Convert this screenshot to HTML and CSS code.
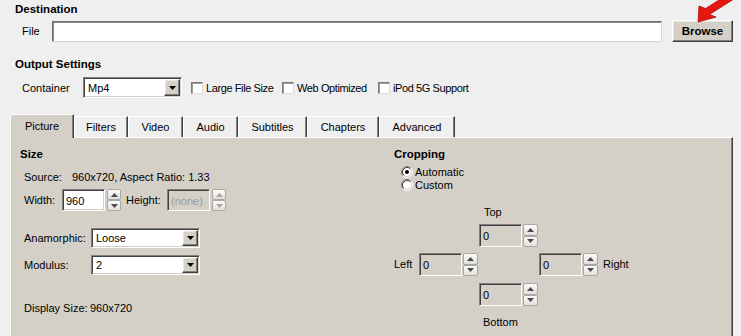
FILE: index.html
```html
<!DOCTYPE html>
<html>
<head>
<meta charset="utf-8">
<link rel="stylesheet" href="styles.css">
</head>
<body>
<div class="app">
  <div class="group-title">Destination</div>
  <div class="file-row">
    <span class="file-lbl">File</span>
    <div class="file-input sunken"></div>
    <button class="browse raised">Browse</button>
  </div>

  <div class="group-title out-title">Output Settings</div>
  <div class="container-row">
    <span class="cont-lbl">Container</span>
    <div class="combo combo-container sunken">
      <span class="combo-text">Mp4</span>
      <span class="combo-btn raised"><svg class="tri" width="7" height="4" viewBox="0 0 7 4"><path d="M0 0h7L3.5 4z"/></svg></span>
    </div>
    <label class="check check-large"><span class="box sunken"></span>Large File Size</label>
    <label class="check check-web"><span class="box sunken"></span>Web Optimized</label>
    <label class="check"><span class="box sunken"></span>iPod 5G Support</label>
  </div>

  <div class="tabs">
    <div class="tab tab-active t-picture">Picture</div>
    <div class="tab t-filters">Filters</div>
    <div class="tab t-video">Video</div>
    <div class="tab t-audio">Audio</div>
    <div class="tab t-subtitles">Subtitles</div>
    <div class="tab t-chapters">Chapters</div>
    <div class="tab t-advanced">Advanced</div>
  </div>

  <div class="panel">
    <div class="size-col">
      <div class="sub-title">Size</div>
      <div class="row info-row"><span class="lbl-source">Source:</span><span>960x720, Aspect Ratio: 1.33</span></div>
      <div class="row width-row">
        <span class="lbl-width">Width:</span>
        <div class="spin spin-tall">
          <div class="spin-field sunken white">960</div>
          <div class="spin-btns">
            <span class="spin-btn"><svg width="7" height="4" viewBox="0 0 7 4"><path d="M0 4h7L3.5 0z"/></svg></span>
            <span class="spin-btn"><svg width="7" height="4" viewBox="0 0 7 4"><path d="M0 0h7L3.5 4z"/></svg></span>
          </div>
        </div>
        <span class="lbl-height">Height:</span>
        <div class="spin spin-tall disabled">
          <div class="spin-field sunken">(none)</div>
          <div class="spin-btns">
            <span class="spin-btn"><svg width="7" height="4" viewBox="0 0 7 4"><path d="M0 4h7L3.5 0z"/></svg></span>
            <span class="spin-btn"><svg width="7" height="4" viewBox="0 0 7 4"><path d="M0 0h7L3.5 4z"/></svg></span>
          </div>
        </div>
      </div>
      <div class="row combo-row anam-row">
        <span class="lbl-combo">Anamorphic:</span>
        <div class="combo combo-wide sunken">
          <span class="combo-text">Loose</span>
          <span class="combo-btn raised"><svg class="tri" width="7" height="4" viewBox="0 0 7 4"><path d="M0 0h7L3.5 4z"/></svg></span>
        </div>
      </div>
      <div class="row combo-row mod-row">
        <span class="lbl-combo">Modulus:</span>
        <div class="combo combo-wide sunken">
          <span class="combo-text">2</span>
          <span class="combo-btn raised"><svg class="tri" width="7" height="4" viewBox="0 0 7 4"><path d="M0 0h7L3.5 4z"/></svg></span>
        </div>
      </div>
      <div class="row display-row"><span class="lbl-display">Display Size:</span><span>960x720</span></div>
    </div>

    <div class="crop-col">
      <div class="sub-title">Cropping</div>
      <div class="radio-row first">
        <svg class="radio" width="12" height="12" viewBox="0 0 12 12"><circle cx="6" cy="6" r="4.5" fill="#fff"/><path d="M9.89 2.11A5.5 5.5 0 0 0 2.11 9.89" stroke="#808080" fill="none"/><path d="M2.11 9.89A5.5 5.5 0 0 0 9.89 2.11" stroke="#fff" fill="none"/><path d="M9.18 2.82A4.5 4.5 0 0 0 2.82 9.18" stroke="#404040" fill="none"/><path d="M2.82 9.18A4.5 4.5 0 0 0 9.18 2.82" stroke="#d4d0c8" fill="none"/><circle cx="6" cy="6" r="2" fill="#000"/></svg>
        <span>Automatic</span>
      </div>
      <div class="radio-row">
        <svg class="radio" width="12" height="12" viewBox="0 0 12 12"><circle cx="6" cy="6" r="4.5" fill="#fff"/><path d="M9.89 2.11A5.5 5.5 0 0 0 2.11 9.89" stroke="#808080" fill="none"/><path d="M2.11 9.89A5.5 5.5 0 0 0 9.89 2.11" stroke="#fff" fill="none"/><path d="M9.18 2.82A4.5 4.5 0 0 0 2.82 9.18" stroke="#404040" fill="none"/><path d="M2.82 9.18A4.5 4.5 0 0 0 9.18 2.82" stroke="#d4d0c8" fill="none"/></svg>
        <span>Custom</span>
      </div>

      <div class="crop-grid">
        <span class="crop-top-lbl">Top</span>
        <div class="spin crop-spin crop-top">
          <div class="spin-field sunken">0</div>
          <div class="spin-btns">
            <span class="spin-btn"><svg width="7" height="4" viewBox="0 0 7 4"><path d="M0 4h7L3.5 0z"/></svg></span>
            <span class="spin-btn"><svg width="7" height="4" viewBox="0 0 7 4"><path d="M0 0h7L3.5 4z"/></svg></span>
          </div>
        </div>
        <span class="crop-left-lbl">Left</span>
        <div class="spin crop-spin crop-left">
          <div class="spin-field sunken">0</div>
          <div class="spin-btns">
            <span class="spin-btn"><svg width="7" height="4" viewBox="0 0 7 4"><path d="M0 4h7L3.5 0z"/></svg></span>
            <span class="spin-btn"><svg width="7" height="4" viewBox="0 0 7 4"><path d="M0 0h7L3.5 4z"/></svg></span>
          </div>
        </div>
        <div class="spin crop-spin crop-right">
          <div class="spin-field sunken">0</div>
          <div class="spin-btns">
            <span class="spin-btn"><svg width="7" height="4" viewBox="0 0 7 4"><path d="M0 4h7L3.5 0z"/></svg></span>
            <span class="spin-btn"><svg width="7" height="4" viewBox="0 0 7 4"><path d="M0 0h7L3.5 4z"/></svg></span>
          </div>
        </div>
        <span class="crop-right-lbl">Right</span>
        <div class="spin crop-spin crop-bottom">
          <div class="spin-field sunken">0</div>
          <div class="spin-btns">
            <span class="spin-btn"><svg width="7" height="4" viewBox="0 0 7 4"><path d="M0 4h7L3.5 0z"/></svg></span>
            <span class="spin-btn"><svg width="7" height="4" viewBox="0 0 7 4"><path d="M0 0h7L3.5 4z"/></svg></span>
          </div>
        </div>
        <span class="crop-bottom-lbl">Bottom</span>
      </div>
    </div>
  </div>
</div>

<svg class="arrow" width="51" height="30" viewBox="0 0 51 30"><path d="M8 22L26 17L19.4 14.5L43.9 -1L40.1 -7L15.6 8.5L9 6Z" fill="#e5170f" stroke="#a30d08" stroke-width="0.8" stroke-linejoin="round"/></svg>
</body>
</html>
```

FILE: styles.css
```css
* { box-sizing: border-box; }
html, body { margin: 0; padding: 0; }
body {
  width: 741px;
  height: 336px;
  overflow: hidden;
  position: relative;
  background: #efefef;
  font-family: "Liberation Sans", Arial, sans-serif;
  font-size: 11px;
  color: #000;
}
.app { padding: 3px 0 0 10px; }

.group-title {
  font-weight: bold;
  font-size: 11.5px;
  line-height: 13px;
  height: 13px;
  padding-left: 5px;
}
.out-title { margin-top: 16px; }

.sunken {
  border: 1px solid;
  border-color: #808080 #ffffff #ffffff #808080;
  box-shadow: inset 1px 1px #404040, inset -1px -1px #d4d0c8;
}
.raised {
  border: 1px solid;
  border-color: #ffffff #404040 #404040 #ffffff;
  box-shadow: inset -1px -1px #808080, inset 1px 1px #e8e6e1;
  background: #d4d0c8;
}

/* File row */
.file-row {
  display: flex;
  align-items: center;
  height: 22px;
  margin-top: 4px;
  padding-left: 12px;
}
.file-lbl { width: 30px; }
.file-input {
  width: 610px;
  height: 21px;
  margin-top: 1px;
  background: #fff;
  border-color: #6e6e6e #d6d6d6 #d6d6d6 #6e6e6e;
  box-shadow: inset 1px 1px #8a8a8a;
}
.browse {
  margin-left: 10px;
  width: 61px;
  height: 22px;
  padding: 0;
  font-family: "Liberation Sans", Arial, sans-serif;
  font-weight: bold;
  font-size: 11.5px;
  color: #000;
}

/* Container row */
.container-row {
  display: flex;
  align-items: center;
  height: 21px;
  margin-top: 6px;
  padding-left: 12px;
}
.cont-lbl { width: 61px; }
.combo {
  display: flex;
  align-items: stretch;
  background: #fff;
  padding: 1px;
}
.combo-container { width: 99px; height: 21px; }
.combo-text {
  flex: 1;
  padding-left: 3px;
  display: flex;
  align-items: center;
}
.combo-btn {
  width: 16px;
  display: flex;
  align-items: center;
  justify-content: center;
}
.tri { fill: #000; display: block; }

.check {
  display: flex;
  align-items: center;
  white-space: nowrap;
  letter-spacing: -0.4px;
}
.check-large { margin-left: 9px; width: 91px; }
.check-web { width: 96px; }
.box {
  width: 12px;
  height: 12px;
  background: #fff;
  margin-right: 3px;
  flex: none;
  border-color: #7a7a7a #dcdcdc #dcdcdc #7a7a7a;
  box-shadow: inset 1px 1px #9a9a9a;
}

/* Tabs */
.tabs {
  display: flex;
  align-items: flex-end;
  height: 23px;
  margin-top: 16px;
  position: relative;
  z-index: 1;
}
.tab {
  height: 21px;
  line-height: 21px;
  text-align: center;
  border-left: 1px solid #ffffff;
  border-top: 1px solid #ffffff;
  border-right: 1px solid #404040;
  box-shadow: inset -1px 0 #808080;
}
.tab-active {
  height: 24px;
  margin-bottom: -1px;
  line-height: 22px;
  background: #d4d0c8;
}
.t-picture { width: 64px; }
.t-filters { width: 54px; }
.t-video { width: 55px; }
.t-audio { width: 55px; }
.t-subtitles { width: 69px; }
.t-chapters { width: 72px; }
.t-advanced { width: 76px; }

/* Panel */
.panel {
  width: 723px;
  height: 210px;
  background: #d4d0c8;
  border-top: 1px solid #ffffff;
  border-left: 1px solid #ffffff;
  border-right: 1px solid #404040;
  box-shadow: inset -1px 0 #808080;
  padding: 10px 0 0 9px;
  display: flex;
}
.sub-title {
  font-weight: bold;
  font-size: 11.5px;
  line-height: 13px;
  height: 13px;
}
.size-col { width: 374px; flex: none; }
.row {
  display: flex;
  align-items: center;
  padding-left: 4px;
}
.info-row { margin-top: 9px; height: 13px; }
.lbl-source { width: 48px; }
.width-row { margin-top: 6px; height: 22px; }
.lbl-width { width: 38px; }
.lbl-height { width: 41px; margin-left: 5px; }
.combo-row { height: 20px; }
.anam-row { margin-top: 17px; }
.mod-row { margin-top: 7px; }
.lbl-combo { width: 67px; }
.combo-wide { width: 109px; height: 20px; }
.display-row { margin-top: 26px; height: 13px; }
.lbl-display { width: 66px; }

/* Spinners */
.spin {
  display: flex;
  gap: 1px;
  height: 23px;
}
.spin-tall { height: 22px; gap: 2px; }
.spin-field {
  width: 43px;
  padding: 1px 0 0 3px;
  display: flex;
  align-items: center;
  background: #d4d0c8;
}
.spin-field.white { background: #fff; }
.disabled .spin-field { color: #9c9a95; }
.spin-btns {
  width: 15px;
  display: flex;
  flex-direction: column;
}
.spin-tall .spin-btns { width: 14px; }
.spin-btn {
  flex: 1;
  display: flex;
  align-items: center;
  justify-content: center;
  border: 1px solid #a9a7a2;
  border-radius: 2px;
  background: linear-gradient(#fbfbfa, #e2e0dc);
  fill: #4a4a4a;
}
.spin-btn svg { display: block; }
.disabled .spin-btn { fill: #a8a6a1; }

/* Cropping */
.crop-col { flex: 1; }
.radio-row {
  display: flex;
  align-items: center;
  height: 13px;
  padding-left: 7px;
}
.radio-row.first { margin-top: 4px; }
.radio { display: block; margin-right: 2px; flex: none; }
.crop-grid {
  display: grid;
  grid-template-columns: 25px 60px 60px 60px auto;
  grid-template-rows: 18px 29px 30px 33px 13px;
  margin-top: 15px;
}
.crop-spin { width: 59px; align-self: start; }
.crop-top-lbl { grid-column: 3; grid-row: 1; padding-left: 5px; line-height: 13px; }
.crop-top { grid-column: 3; grid-row: 2; }
.crop-left-lbl { grid-column: 1; grid-row: 3; line-height: 23px; }
.crop-left { grid-column: 2; grid-row: 3; }
.crop-right { grid-column: 4; grid-row: 3; }
.crop-right-lbl { grid-column: 5; grid-row: 3; padding-left: 4px; line-height: 23px; }
.crop-bottom { grid-column: 3; grid-row: 4; }
.crop-bottom-lbl { grid-column: 3; grid-row: 5; padding-left: 4px; line-height: 13px; }

/* Red annotation arrow */
.arrow {
  position: absolute;
  left: 690px;
  top: 0;
  z-index: 5;
  overflow: visible;
}
```
